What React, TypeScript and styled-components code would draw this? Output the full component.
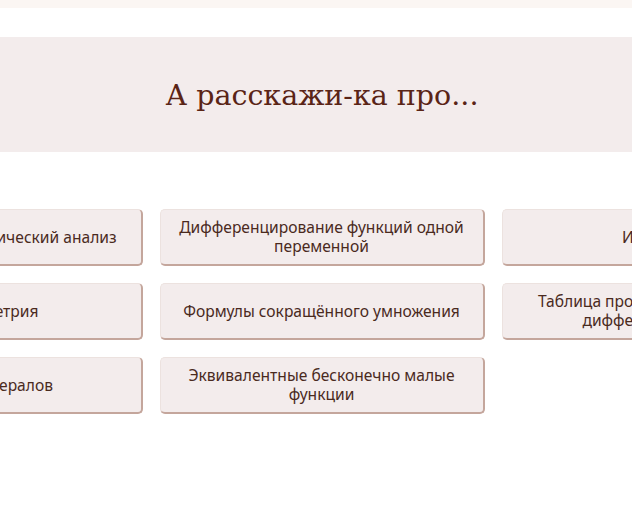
import styled, { createGlobalStyle } from "styled-components";

const GlobalStyle = createGlobalStyle`
  html, body {
    margin: 0;
    padding: 0;
    background: #ffffff;
    overflow: hidden;
  }
`;

const topics = [
  "Введение в математический анализ",
  "Дифференцирование функций одной переменной",
  "Интегралы",
  "Тригонометрия",
  "Формулы сокращённого умножения",
  "Таблица производных и правила дифференцирования",
  "Таблица литералов",
  "Эквивалентные бесконечно малые функции",
];

const App = () => {
  return (
    <Page>
      <GlobalStyle />
      <TopBar />
      <Banner>
        <Title>А расскажи-ка про...</Title>
      </Banner>
      <TopicGrid>
        {topics.map((topic) => (
          <TopicButton key={topic}>{topic}</TopicButton>
        ))}
      </TopicGrid>
    </Page>
  );
};

const Page = styled.div`
  width: 644px;
  min-height: 531px;
`;

const TopBar = styled.div`
  height: 8px;
  background-color: #fbf6f3;
`;

const Banner = styled.div`
  margin-top: 29px;
  height: 115px;
  background-color: #f3ecec;
  display: flex;
  align-items: center;
  justify-content: center;
`;

const Title = styled.h1`
  margin: 2px 0 0;
  font-family: "DejaVu Serif", serif;
  font-weight: normal;
  font-size: 28.5px;
  color: #5a2416;
`;

const TopicGrid = styled.div`
  margin-top: 57px;
  display: grid;
  grid-template-columns: repeat(3, 325px);
  justify-content: center;
  gap: 17px 17px;
`;

const TopicButton = styled.button`
  box-sizing: border-box;
  min-height: 57px;
  padding: 6px 12px;
  background-color: #f3ecec;
  border: 1px solid #ece2df;
  border-right: 2px solid #c4a69c;
  border-bottom: 2px solid #c4a69c;
  border-radius: 5px;
  font-family: "Noto Sans", sans-serif;
  font-size: 15.6px;
  line-height: 19px;
  color: #4a2a1e;
  text-align: center;
  cursor: pointer;
`;

export default App;
